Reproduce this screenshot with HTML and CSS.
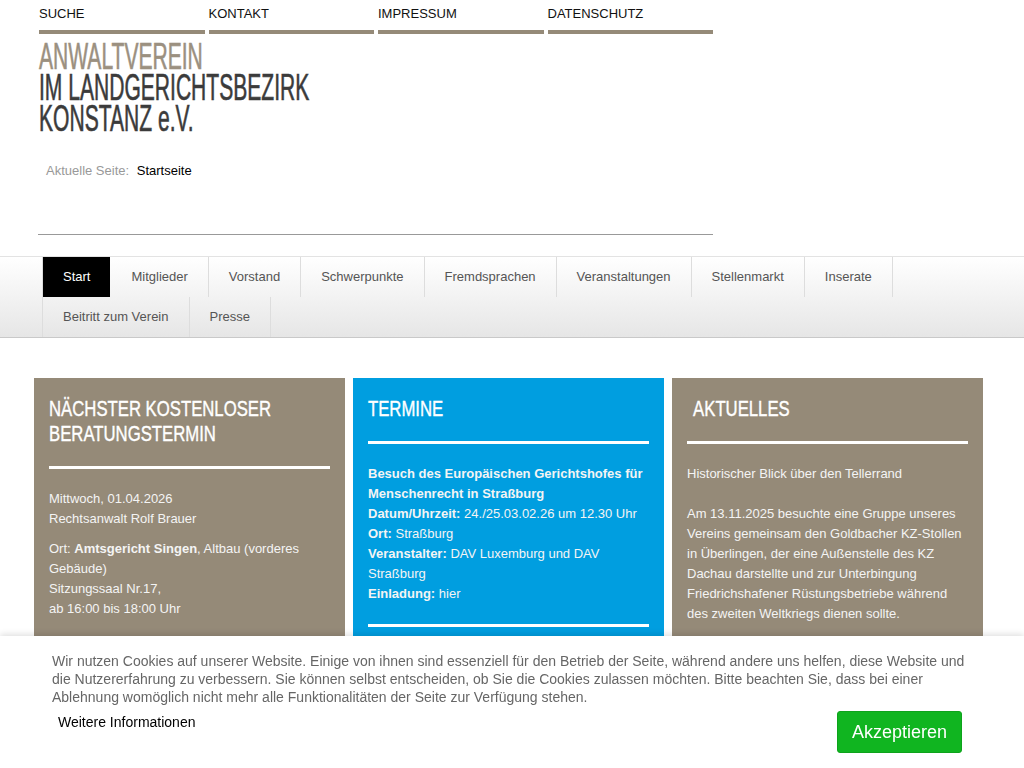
FILE: index.html
```html
<!DOCTYPE html>
<html>
<head>
  <title>Anwaltverein im Landgerichtsbezirk Konstanz e.V.</title>
  <link rel="stylesheet" href="styles.css">
</head>
<body>
  <div class="header">
    <ul class="toplinks">
      <li><a href="#">Suche</a></li>
      <li><a href="#">Kontakt</a></li>
      <li><a href="#">Impressum</a></li>
      <li><a href="#">Datenschutz</a></li>
    </ul>

    <div class="logo">
      <span class="logo-light">ANWALTVEREIN</span>
      <span>IM LANDGERICHTSBEZIRK</span>
      <span>KONSTANZ e.V.</span>
    </div>

    <div class="breadcrumb">
      <span class="breadcrumb-label">Aktuelle Seite:</span>
      <span>Startseite</span>
    </div>
  </div>

  <div class="mainnav">
    <ul>
      <li class="active"><a href="#">Start</a></li>
      <li><a href="#">Mitglieder</a></li>
      <li><a href="#">Vorstand</a></li>
      <li><a href="#">Schwerpunkte</a></li>
      <li><a href="#">Fremdsprachen</a></li>
      <li><a href="#">Veranstaltungen</a></li>
      <li><a href="#">Stellenmarkt</a></li>
      <li><a href="#">Inserate</a></li>
      <li><a href="#">Beitritt zum Verein</a></li>
      <li><a href="#">Presse</a></li>
    </ul>
  </div>

  <div class="boxes">
    <div class="box">
      <h2>Nächster kostenloser Beratungstermin</h2>
      <hr>
      <p>Mittwoch, 01.04.2026<br>Rechtsanwalt Rolf Brauer</p>
      <p>Ort: <strong>Amtsgericht Singen</strong>, Altbau (vorderes Gebäude)<br>Sitzungssaal Nr.17,<br>ab 16:00 bis 18:00 Uhr</p>
    </div>

    <div class="box blue">
      <h2>Termine</h2>
      <hr>
      <p><strong>Besuch des Europäischen Gerichtshofes für Menschenrecht in Straßburg</strong><br>
      <strong>Datum/Uhrzeit:</strong> 24./25.03.02.26 um 12.30 Uhr<br>
      <strong>Ort:</strong> Straßburg<br>
      <strong>Veranstalter:</strong> DAV Luxemburg und DAV Straßburg<br>
      <strong>Einladung:</strong> hier</p>
      <hr>
    </div>

    <div class="box">
      <h2 class="indent">Aktuelles</h2>
      <hr>
      <p>Historischer Blick über den Tellerrand<br><br>Am 13.11.2025 besuchte eine Gruppe unseres Vereins gemeinsam den Goldbacher KZ-Stollen in Überlingen, der eine Außenstelle des KZ Dachau darstellte und zur Unterbingung Friedrichshafener Rüstungsbetriebe während des zweiten Weltkriegs dienen sollte.</p>
    </div>
  </div>

  <div class="cookie">
    <p>Wir nutzen Cookies auf unserer Website. Einige von ihnen sind essenziell für den Betrieb der Seite, während andere uns helfen, diese Website und die Nutzererfahrung zu verbessern. Sie können selbst entscheiden, ob Sie die Cookies zulassen möchten. Bitte beachten Sie, dass bei einer Ablehnung womöglich nicht mehr alle Funktionalitäten der Seite zur Verfügung stehen.</p>
    <div class="cookie-actions">
      <a href="#">Weitere Informationen</a>
      <button>Akzeptieren</button>
    </div>
  </div>
</body>
</html>
```

FILE: styles.css
```css
body {
  font-family: "Liberation Sans", Arial, sans-serif;
  font-size: 13px;
  margin: 0;
  padding: 0;
  color: #333;
  background: #fff;
}
a {
  text-decoration: none;
  color: inherit;
}
.header {
  width: 675px;
  margin-left: 38px;
  padding-top: 7px;
}
.toplinks {
  list-style: none;
  margin: 0 0 0 1px;
  padding: 0;
  display: grid;
  grid-template-columns: repeat(4, 1fr);
  gap: 4px;
}
.toplinks li {
  border-bottom: 4px solid #958a78;
  padding-bottom: 9px;
  line-height: 14px;
  text-transform: uppercase;
  color: #111;
}
.logo {
  margin: 7px 0 0 1px;
  font-size: 36px;
  line-height: 31px;
  color: #3b3b3b;
}
.logo span {
  display: block;
  width: 700px;
  transform: scaleX(0.585);
  transform-origin: left center;
  -webkit-text-stroke: 0.6px #3b3b3b;
}
.logo .logo-light {
  color: #9b9080;
  -webkit-text-stroke-color: #9b9080;
}
.breadcrumb {
  margin: 29px 0 0 8px;
  line-height: 16px;
  color: #000;
}
.breadcrumb-label {
  color: #999;
  margin-right: 4px;
}
.header::after {
  content: "";
  display: block;
  margin-top: 55px;
  border-bottom: 1px solid #999;
}
.mainnav {
  margin-top: 21px;
  background: linear-gradient(#fff, #e6e6e6);
  border-top: 1px solid #e3e3e3;
  border-bottom: 1px solid #c9c9c9;
  padding-left: 42px;
}
.mainnav ul {
  list-style: none;
  margin: 0;
  padding: 0;
  display: flex;
  flex-wrap: wrap;
  width: 860px;
  border-left: 1px solid #ddd;
}
.mainnav li {
  border-right: 1px solid #ddd;
}
.mainnav li a {
  display: block;
  height: 40px;
  line-height: 40px;
  padding: 0 20px;
  color: #555;
}
.mainnav li.active {
  border-right-color: transparent;
}
.mainnav li.active a {
  background: #000;
  color: #fff;
}
.boxes {
  display: flex;
  gap: 8px;
  margin: 40px 0 0 34px;
}
.box {
  width: 281px;
  height: 300px;
  padding: 18px 15px 0;
  background: #958a78;
  color: #f4f4f4;
}
.box.blue {
  background: #009ee0;
}
.box h2 {
  width: 370px;
  font-size: 22px;
  line-height: 25px;
  font-weight: normal;
  text-transform: uppercase;
  color: #fff;
  margin: 0 0 20px;
  transform: scaleX(0.76);
  transform-origin: left center;
  -webkit-text-stroke: 0.4px #fff;
}
.box h2.indent {
  padding-left: 8px;
}
.box hr {
  border: 0;
  border-top: 3px solid #fff;
  margin: 0 0 20px;
}
.box p {
  margin: 0 0 10px;
  line-height: 20px;
}
.box.blue p {
  margin-bottom: 20px;
}
.cookie {
  position: fixed;
  left: 0;
  right: 0;
  bottom: 0;
  height: 116px;
  padding: 16px 0 0 52px;
  background: #fff;
  box-shadow: 0 -2px 6px rgba(0, 0, 0, 0.12);
  font-size: 14px;
}
.cookie p {
  margin: 0;
  width: 920px;
  line-height: 18px;
  color: #666;
}
.cookie-actions {
  display: flex;
  justify-content: space-between;
  align-items: flex-start;
  width: 910px;
  margin-top: 5px;
}
.cookie-actions a {
  margin: 2px 0 0 6px;
  line-height: 18px;
  color: #000;
}
.cookie-actions button {
  width: 125px;
  height: 42px;
  background: #10b520;
  border: 1px solid #0ea31c;
  border-radius: 3px;
  color: #fff;
  font-family: "Liberation Sans", Arial, sans-serif;
  font-size: 18px;
  cursor: pointer;
}
```
